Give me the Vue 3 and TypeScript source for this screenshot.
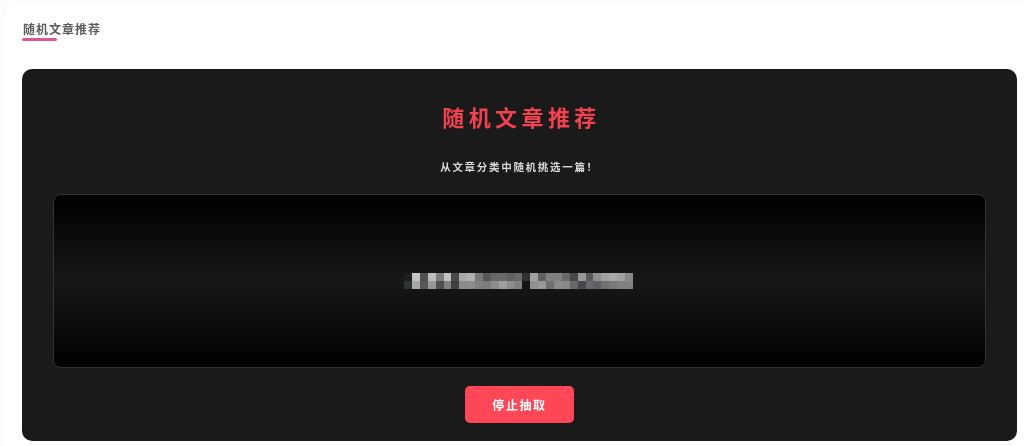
<script setup lang="ts">
const row1 = ['#1c1f1f','#c4c4c4','#505050','#bcbcbc','#7c7c7c','#c0c0c0','#484848','#a8a8a8','#b0b0b0','#787878','#585858','#686868','#686868','#606060','#686868','#303030','#a0a0a0','#606060','#808080','#808080','#686868','#484848','#989898','#585858','#909090','#a0a0a0','#a8a8a8','#a0a0a0','#888888']
const row2 = ['#2c3535','#a8a8a8','#585858','#989898','#505050','#808080','#404040','#8c8c8c','#8c8c8c','#808080','#7c7c7c','#8c8c8c','#a0a0a0','#8c8c8c','#808080','#141414','#909090','#989898','#707070','#8c8c8c','#888888','#686868','#48484f','#686868','#606068','#707070','#787878','#808080','#808080']
</script>

<template>
  <main class="page">
    <section class="panel">
      <nav class="tabs">
        <span class="tab">随机文章推荐</span>
      </nav>
      <article class="card">
        <h1 class="title">随机文章推荐</h1>
        <p class="subtitle">从文章分类中随机挑选一篇！</p>
        <div class="stage">
          <div class="mosaic" aria-label="模糊的文章标题">
            <div class="mosaic-row">
              <i v-for="(c, i) in row1" :key="i" class="cell" :style="{ backgroundColor: c }"></i>
            </div>
            <div class="mosaic-row">
              <i v-for="(c, i) in row2" :key="i" class="cell" :style="{ backgroundColor: c }"></i>
            </div>
          </div>
        </div>
        <button class="action" type="button"><span class="action-label">停止抽取</span></button>
      </article>
    </section>
  </main>
</template>

<style scoped>
.page {
  height: 446px;
  box-sizing: border-box;
  padding: 5px 0 0 6px;
  overflow: hidden;
  background: #fcfcfc;
  font-family: "Noto Sans CJK SC", "Noto Sans", sans-serif;
}
.panel {
  height: 441px;
  box-sizing: border-box;
  padding: 15px 7px 5px 16px;
  background: #fff;
  border-radius: 8px 0 0 0;
  display: flex;
  flex-direction: column;
}
.tabs {
  display: flex;
  height: 49px;
  flex: none;
}
.tab {
  position: relative;
  align-self: flex-start;
  margin-left: 1px;
  font-size: 12px;
  line-height: 17px;
  font-weight: 700;
  letter-spacing: 1px;
  color: #5c5c5c;
  filter: blur(0.3px);
}
.tab::after {
  content: "";
  position: absolute;
  left: -1px;
  top: 18px;
  width: 35px;
  height: 2.5px;
  border-radius: 2px;
  background: #df5499;
}
.card {
  flex: 1;
  min-height: 0;
  box-sizing: border-box;
  padding: 0 31px;
  background: #1a1a1a;
  border-radius: 10px;
  display: flex;
  flex-direction: column;
  align-items: center;
}
.title {
  margin: 31px 0 0;
  padding-left: 4px;
  font-size: 22px;
  line-height: 32px;
  font-weight: 700;
  letter-spacing: 4.4px;
  color: #f2414f;
  filter: blur(0.3px);
}
.subtitle {
  margin: 27px 0 0;
  font-size: 10.5px;
  line-height: 16px;
  font-weight: 700;
  letter-spacing: 1.7px;
  color: #d8d8d8;
  filter: blur(0.3px);
}
.stage {
  width: 100%;
  height: 174px;
  flex: none;
  margin-top: 19px;
  box-sizing: border-box;
  border: 1px solid #333;
  border-radius: 8px;
  background: linear-gradient(180deg, #000 0%, #171717 50%, #000 100%);
  display: flex;
  align-items: center;
  justify-content: center;
}
.mosaic {
  display: flex;
  flex-direction: column;
  transform: translateX(-1px);
  filter: blur(0.4px);
}
.mosaic-row {
  display: flex;
}
.cell {
  display: block;
  width: 7.9px;
  height: 8px;
}
.action {
  width: 109px;
  height: 37px;
  flex: none;
  margin-top: 18px;
  border: 0;
  border-radius: 5px;
  background: #ff4757;
  color: #fff;
  font-family: inherit;
  font-size: 12px;
  font-weight: 700;
  letter-spacing: 1.6px;
}
.action-label {
  display: block;
  filter: blur(0.3px);
}
</style>

<style>
html, body { margin: 0; background: #fff; }
</style>
